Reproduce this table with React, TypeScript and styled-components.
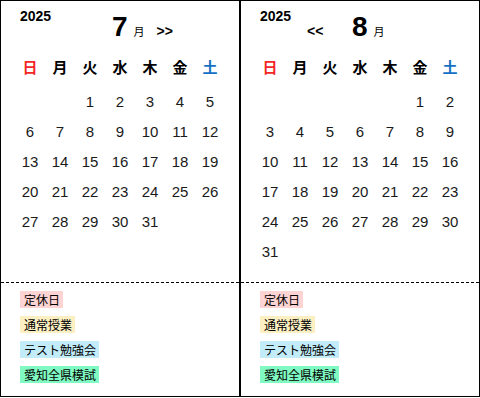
import styled, { createGlobalStyle } from 'styled-components';

const GlobalStyle = createGlobalStyle`
  html, body {
    margin: 0;
    padding: 0;
    background: #fff;
  }
  body {
    font-family: "Liberation Sans", Arial, "Noto Sans CJK JP", sans-serif;
    color: #000;
  }
`;

const CJK = `"Noto Sans CJK JP", "Liberation Sans", sans-serif`;

const Board = styled.div`
  display: flex;
  width: 480px;
`;

const Panel = styled.section`
  width: 240px;
  height: 397px;
  border: 1px solid #000;
  box-sizing: border-box;
  display: flex;
  flex-direction: column;
`;

const CalendarSection = styled.div`
  flex: 0 0 281px;
  padding: 0 14px;
`;

const Header = styled.div`
  display: flex;
  align-items: flex-start;
  height: 51px;
`;

const Year = styled.div`
  width: 45px;
  box-sizing: border-box;
  margin-top: 7px;
  padding-left: 5px;
  font-size: 14px;
  line-height: 16px;
  font-weight: 700;
`;

const MonthNav = styled.div`
  display: flex;
  align-items: baseline;
  margin-top: 12px;
`;

const PrevSlot = styled.div`
  width: 52px;
  box-sizing: border-box;
  padding-left: 7px;
  font-size: 14px;
  font-weight: 700;
`;

const MonthNumber = styled.span`
  font-size: 28px;
  line-height: 28px;
  font-weight: 700;
`;

const MonthSuffix = styled.span`
  margin-left: 6px;
  font-family: ${CJK};
  font-size: 11px;
`;

const NextLink = styled.span`
  margin-left: 12px;
  font-size: 14px;
  font-weight: 700;
`;

const WeekRow = styled.div`
  display: grid;
  grid-template-columns: repeat(7, 30px);
  height: 30px;
`;

const WeekDay = styled.div<{ $tone?: 'sun' | 'sat' }>`
  text-align: center;
  line-height: 30px;
  font-family: ${CJK};
  font-size: 15px;
  font-weight: 700;
  color: ${p => (p.$tone === 'sun' ? '#f32727' : p.$tone === 'sat' ? '#1470c4' : '#000')};
`;

const DayGrid = styled.div`
  display: grid;
  grid-template-columns: repeat(7, 30px);
  grid-auto-rows: 30px;
  margin-top: 5px;
`;

const Day = styled.div`
  text-align: center;
  line-height: 30px;
  font-size: 15px;
  color: #1a1a1a;
`;

const Legend = styled.div`
  flex: 1;
  border-top: 1px dashed #000;
  padding: 8px 0 0 19px;
  display: flex;
  flex-direction: column;
  align-items: flex-start;
  gap: 7px;
`;

const LegendTag = styled.span<{ $bg: string }>`
  background: ${p => p.$bg};
  font-family: ${CJK};
  font-size: 12px;
  line-height: 18px;
  padding: 0 3px 0 4px;
  color: #000;
`;

const weekdays: { label: string; tone?: 'sun' | 'sat' }[] = [
  { label: '日', tone: 'sun' },
  { label: '月' },
  { label: '火' },
  { label: '水' },
  { label: '木' },
  { label: '金' },
  { label: '土', tone: 'sat' },
];

const legend = [
  { label: '定休日', bg: '#fdd3d3' },
  { label: '通常授業', bg: '#fcefc2' },
  { label: 'テスト勉強会', bg: '#c2ecfa' },
  { label: '愛知全県模試', bg: '#80fac2' },
];

const months = [
  { year: 2025, month: 7, offset: 2, days: 31, prev: false, next: true },
  { year: 2025, month: 8, offset: 5, days: 31, prev: true, next: false },
];

const MonthPanel = ({ year, month, offset, days, prev, next }: (typeof months)[number]) => {
  const cells: (number | null)[] = [
    ...Array.from({ length: offset }, () => null),
    ...Array.from({ length: days }, (_, i) => i + 1),
  ];

  return (
    <Panel>
      <CalendarSection>
        <Header>
          <Year>{year}</Year>
          <MonthNav>
            <PrevSlot>{prev ? '<<' : ''}</PrevSlot>
            <MonthNumber>{month}</MonthNumber>
            <MonthSuffix>月</MonthSuffix>
            {next && <NextLink>&gt;&gt;</NextLink>}
          </MonthNav>
        </Header>
        <WeekRow>
          {weekdays.map(w => (
            <WeekDay key={w.label} $tone={w.tone}>
              {w.label}
            </WeekDay>
          ))}
        </WeekRow>
        <DayGrid>
          {cells.map((d, i) => (
            <Day key={i}>{d ?? ''}</Day>
          ))}
        </DayGrid>
      </CalendarSection>
      <Legend>
        {legend.map(item => (
          <div key={item.label}>
            <LegendTag $bg={item.bg}>{item.label}</LegendTag>
          </div>
        ))}
      </Legend>
    </Panel>
  );
};

export default function App() {
  return (
    <>
      <GlobalStyle />
      <Board>
        {months.map(m => (
          <MonthPanel key={m.month} {...m} />
        ))}
      </Board>
    </>
  );
}
